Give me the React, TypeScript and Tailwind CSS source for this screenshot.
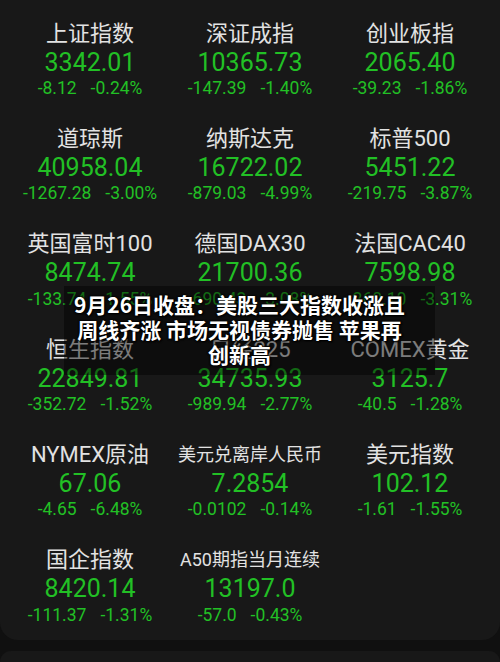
import React from "react";

type Item = { name: string; value: string; chg: string; pct: string; small?: boolean };

const items: Item[] = [
  { name: "上证指数", value: "3342.01", chg: "-8.12", pct: "-0.24%" },
  { name: "深证成指", value: "10365.73", chg: "-147.39", pct: "-1.40%" },
  { name: "创业板指", value: "2065.40", chg: "-39.23", pct: "-1.86%" },
  { name: "道琼斯", value: "40958.04", chg: "-1267.28", pct: "-3.00%" },
  { name: "纳斯达克", value: "16722.02", chg: "-879.03", pct: "-4.99%" },
  { name: "标普500", value: "5451.22", chg: "-219.75", pct: "-3.87%" },
  { name: "英国富时100", value: "8474.74", chg: "-133.74", pct: "-1.55%" },
  { name: "德国DAX30", value: "21700.36", chg: "-690.43", pct: "-3.08%" },
  { name: "法国CAC40", value: "7598.98", chg: "-260.10", pct: "-3.31%" },
  { name: "恒生指数", value: "22849.81", chg: "-352.72", pct: "-1.52%" },
  { name: "日经225", value: "34735.93", chg: "-989.94", pct: "-2.77%" },
  { name: "COMEX黄金", value: "3125.7", chg: "-40.5", pct: "-1.28%" },
  { name: "NYMEX原油", value: "67.06", chg: "-4.65", pct: "-6.48%" },
  { name: "美元兑离岸人民币", value: "7.2854", chg: "-0.0102", pct: "-0.14%", small: true },
  { name: "美元指数", value: "102.12", chg: "-1.61", pct: "-1.55%" },
  { name: "国企指数", value: "8420.14", chg: "-111.37", pct: "-1.31%" },
  { name: "A50期指当月连续", value: "13197.0", chg: "-57.0", pct: "-0.43%", small: true },
];

const cjk = "font-['Roboto','Noto_Sans_CJK_SC',sans-serif]";

function Cell({ it }: { it: Item }) {
  return (
    <div className="flex flex-col items-center">
      <div
        className={`h-[30px] flex items-center whitespace-nowrap text-[#e2e2e2] ${cjk} ${
          it.small ? "text-[18px]" : "text-[22px]"
        }`}
      >
        {it.name}
      </div>
      <div className="h-[28px] flex items-center text-[25px] text-[#22c025] font-['Roboto',sans-serif] leading-none">
        {it.value}
      </div>
      <div className="h-[25px] flex items-center gap-[14px] text-[17.5px] text-[#22c025] font-['Roboto',sans-serif] leading-none">
        <span>{it.chg}</span>
        <span>{it.pct}</span>
      </div>
    </div>
  );
}

export default function App() {
  return (
    <div className="relative w-[500px] h-[662px] overflow-hidden bg-[#101010] flex flex-col">
      <div className="h-[640px] shrink-0 bg-[#181818] rounded-b-[18px] px-[10px] pt-[18px]">
        <div className="grid grid-cols-3 gap-y-[22.4px]">
          {items.map((it, i) => (
            <Cell key={i} it={it} />
          ))}
        </div>
      </div>
      <div className="mt-[11px] flex-1 bg-[#181818] rounded-t-[18px]" />

      <div className="absolute left-[64px] top-[286px] w-[371px] h-[89px] bg-[rgba(0,0,0,0.45)] flex flex-col items-center justify-center pb-[2px] pr-[20px]">
        {["9月26日收盘：美股三大指数收涨且", "周线齐涨 市场无视债券抛售 苹果再", "创新高"].map((l, i) => (
          <div
            key={i}
            className="text-white font-bold text-[21px] leading-[25px] whitespace-pre font-['Noto_Sans_CJK_SC',sans-serif] [text-shadow:0_0_2px_#000,0_0_2px_#000,0_0_1px_#000,1px_1px_2px_#000]"
          >
            {l}
          </div>
        ))}
      </div>
    </div>
  );
}
